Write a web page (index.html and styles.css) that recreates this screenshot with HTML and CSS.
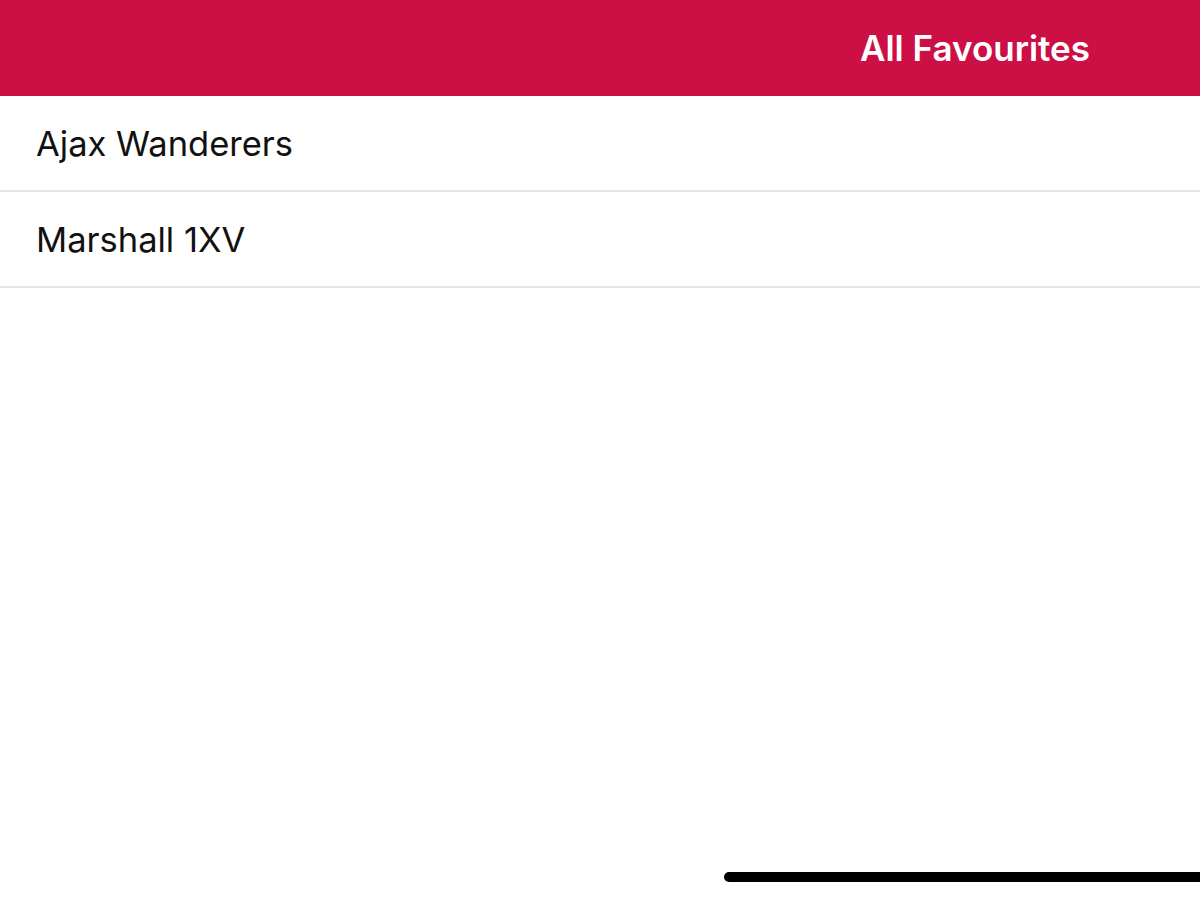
FILE: index.html
```html
<!DOCTYPE html>
<html lang="en">
<head>
    <meta charset="UTF-8">
    <meta name="viewport" content="width=device-width, initial-scale=1.0">
    <title>All Favourites</title>
    <link rel="stylesheet" href="styles.css">
</head>
<body>
    <div class="screen">
        <header class="nav-bar">
            <h1>All Favourites</h1>
        </header>
        <ul class="fav-list">
            <li>Ajax Wanderers</li>
            <li>Marshall 1XV</li>
        </ul>
        <div class="home-indicator"></div>
    </div>
</body>
</html>
```

FILE: styles.css
```css
body {
    margin: 0;
    padding: 0;
    font-family: 'Inter', 'Roboto', sans-serif;
    background: #fff;
    overflow: hidden;
}
.screen {
    position: relative;
    width: 1200px;
    height: 900px;
    overflow: hidden;
}
.nav-bar {
    height: 96px;
    background-color: #cc1045;
    display: flex;
    align-items: center;
    justify-content: flex-end;
    padding-right: 110px;
}
.nav-bar h1 {
    margin: 0;
    color: #fff;
    font-size: 35px;
    font-weight: 600;
}
.fav-list {
    list-style: none;
    margin: 0;
    padding: 0;
}
.fav-list li {
    height: 94px;
    display: flex;
    align-items: center;
    padding-left: 36px;
    font-size: 34.5px;
    color: #111;
    border-bottom: 2px solid #e4e4e4;
}
.home-indicator {
    position: absolute;
    left: 724px;
    bottom: 18px;
    width: 600px;
    height: 10px;
    border-radius: 5px;
    background: #000;
}
```
